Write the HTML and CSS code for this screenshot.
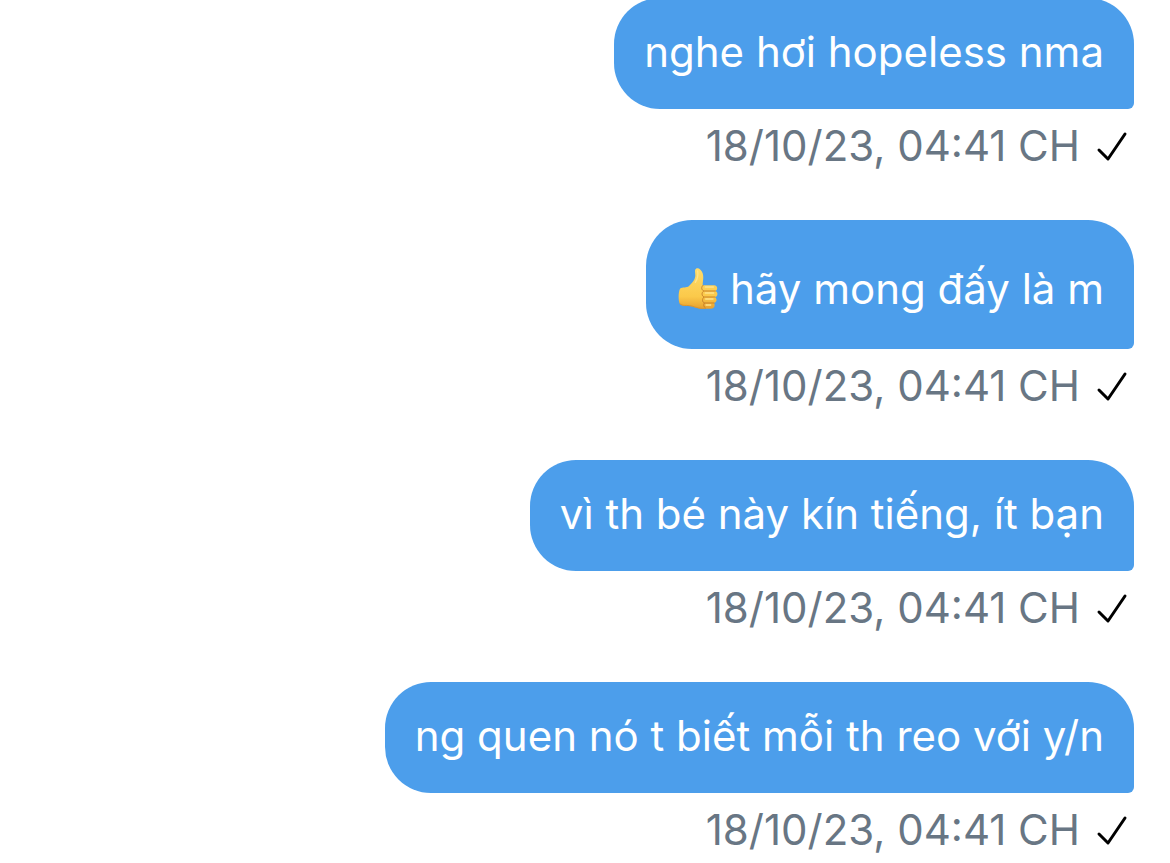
FILE: index.html
```html
<!DOCTYPE html>
<html lang="vi">
<head>
<meta charset="utf-8">
<meta name="viewport" content="width=device-width, initial-scale=1">
<title>Tin nhắn</title>
<link rel="stylesheet" href="styles.css">
</head>
<body>
<main class="thread">
  <article class="message">
    <p class="bubble">nghe hơi hopeless nma</p>
    <footer class="meta"><time>18/10/23, 04:41 CH</time><svg class="check" viewBox="0 0 32 32" aria-hidden="true"><path d="M3 20 12 29 29 4"/></svg></footer>
  </article>
  <article class="message">
    <p class="bubble bubble-emoji">
      <svg class="thumb" viewBox="54 56 126 126" role="img" aria-label="thumbs up">
        <defs>
          <linearGradient id="skin" x1="0" y1="0" x2="0" y2="1"><stop offset="0" stop-color="#ffdc6b"/><stop offset="0.7" stop-color="#fbc94a"/><stop offset="1" stop-color="#e7a02f"/></linearGradient>
        </defs>
        <path fill="url(#skin)" d="M66 118C74 112 86 117 93 110C103 101 112 91 112 78C112 70 109 62 114 58C121 54 130 61 134 72C138 84 134 95 134 108H168C180 108 180 122 172 125C181 128 180 142 171 144C178 148 177 159 168 161C173 168 169 178 158 178H136C119 180 108 170 94 170C82 169 73 172 66 165C60 153 61 128 66 118Z"/>
        <path fill="none" stroke="#c9822b" stroke-width="3" stroke-linecap="round" d="M135 108C129 113 130 121 137 125C130 130 131 140 138 143C132 148 132 158 139 161C135 166 137 173 142 176M138 125H172M138 143H171M139 161H168"/>
        <path fill="none" stroke="#ffe48b" stroke-width="4" stroke-linecap="round" d="M142 113H166M142 131H167M143 149H165M144 167H158M119 65C121 78 118 90 112 99"/>
        <path fill="none" stroke="#d99431" stroke-width="3" stroke-linecap="round" d="M66 164C75 171 83 167 94 169C108 170 119 179 140 177"/>
      </svg>
      <span>hãy mong đấy là m</span>
    </p>
    <footer class="meta"><time>18/10/23, 04:41 CH</time><svg class="check" viewBox="0 0 32 32" aria-hidden="true"><path d="M3 20 12 29 29 4"/></svg></footer>
  </article>
  <article class="message">
    <p class="bubble">vì th bé này kín tiếng, ít bạn</p>
    <footer class="meta"><time>18/10/23, 04:41 CH</time><svg class="check" viewBox="0 0 32 32" aria-hidden="true"><path d="M3 20 12 29 29 4"/></svg></footer>
  </article>
  <article class="message">
    <p class="bubble">ng quen nó t biết mỗi th reo với y/n</p>
    <footer class="meta"><time>18/10/23, 04:41 CH</time><svg class="check" viewBox="0 0 32 32" aria-hidden="true"><path d="M3 20 12 29 29 4"/></svg></footer>
  </article>
</main>
</body>
</html>
```
FILE: styles.css
```css
* { box-sizing: border-box; }
body { margin: 0; background: #fff; font-family: Inter, "Noto Sans", sans-serif; font-size: 42px; }
.thread { display: flex; flex-direction: column; gap: 48px; margin-top: -2px; padding-right: 36px; }
.message { display: flex; flex-direction: column; align-items: flex-end; }
.bubble { display: flex; align-items: center; gap: 12px; margin: 0; padding: 28px 30px 31px; border-radius: 46px 46px 6px 46px; background: #4c9eeb; color: #fff; line-height: 52px; }
.bubble-emoji { padding-top: 43px; padding-bottom: 34px; }
.meta { display: flex; align-items: center; gap: 16px; padding: 11px 6px 0 0; color: #687684; line-height: 52px; }
.check { width: 32px; height: 32px; fill: none; stroke: #000; stroke-width: 3; stroke-linecap: round; stroke-linejoin: round; }
.thumb { width: 42px; height: 42px; }
```
